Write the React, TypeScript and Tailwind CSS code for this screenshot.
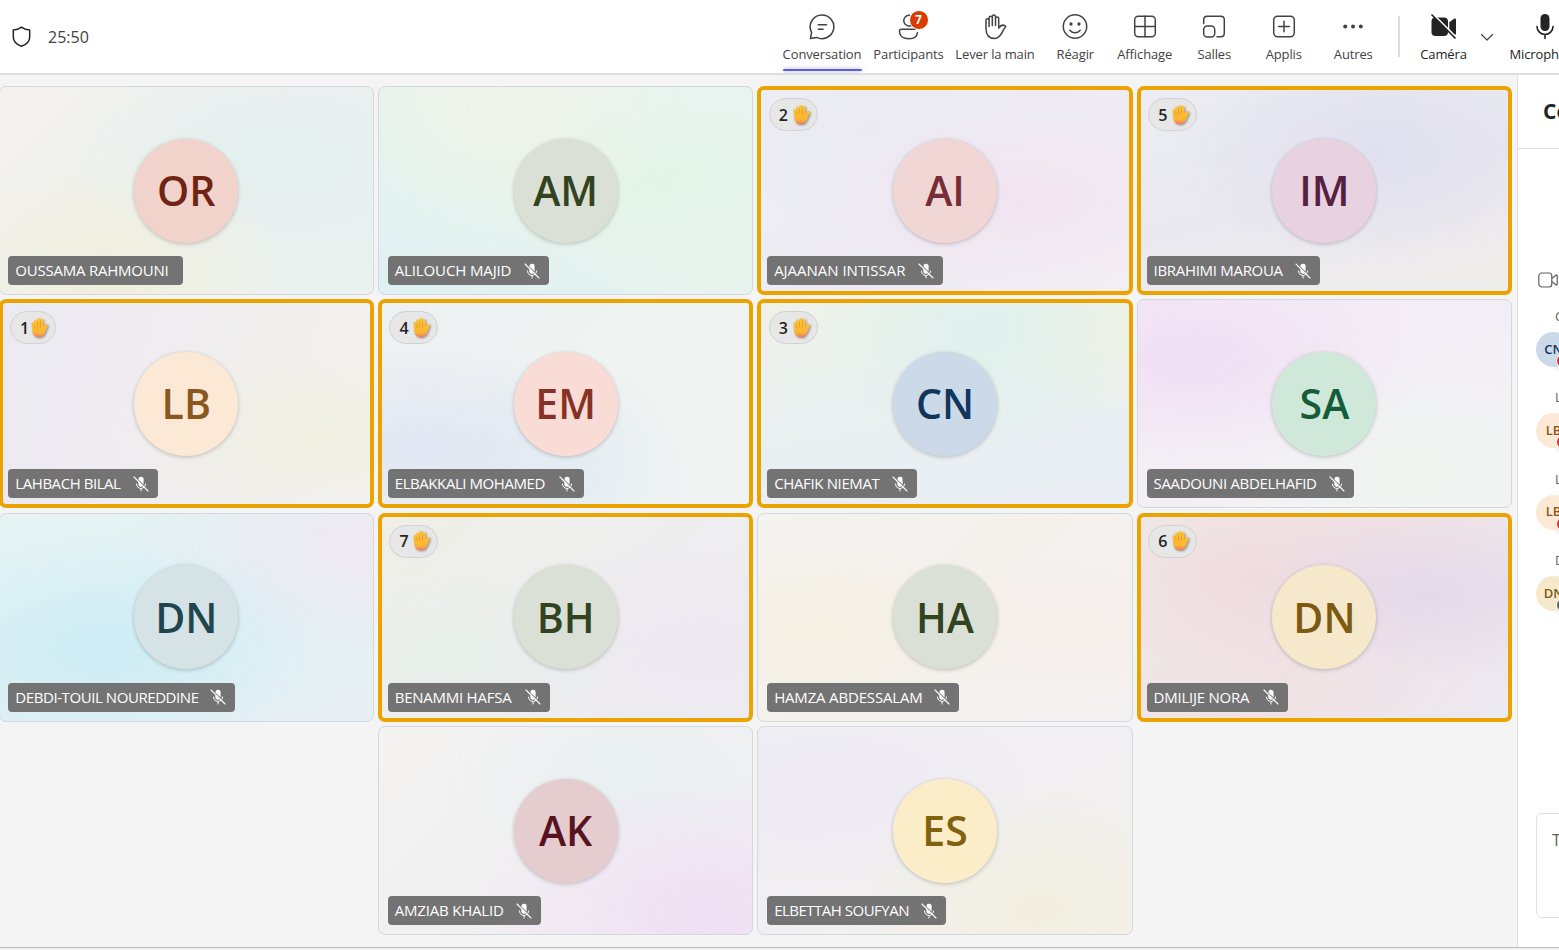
import type { ReactNode } from "react";

type Person = {
  initials: string;
  name: string;
  label: string;
  bg: string;
  avatar: string;
  muted?: boolean;
  hand?: number;
};

const people: Person[] = [
  {
    initials: "OR", name: "OUSSAMA RAHMOUNI", label: "w-[175px] tracking-[-0.23px]",
    bg: "bg-[radial-gradient(ellipse_at_28%_92%,#f1efdc_0%,transparent_48%),radial-gradient(ellipse_at_72%_35%,#e3efee_0%,transparent_55%),linear-gradient(135deg,#f4f2f0_0%,#edf0ee_50%,#e9f2f0_100%)]",
    avatar: "bg-[#f1d3cb] text-[#6f2414]",
  },
  {
    initials: "AM", name: "ALILOUCH MAJID", label: "w-[161px] tracking-[-0.13px]", muted: true,
    bg: "bg-[radial-gradient(ellipse_at_35%_5%,#eff3e8_0%,transparent_50%),radial-gradient(ellipse_at_75%_45%,#e3f4e7_0%,transparent_50%),linear-gradient(30deg,#e0f1f3_0%,#e7f3ed_50%,#e8f4f0_100%)]",
    avatar: "bg-[#dae0d5] text-[#31431f]",
  },
  {
    initials: "AI", name: "AJAANAN INTISSAR", label: "w-[176px] tracking-[-0.02px]", muted: true, hand: 2,
    bg: "bg-[radial-gradient(ellipse_at_70%_55%,#f1e4f0_0%,transparent_55%),radial-gradient(ellipse_at_30%_20%,#ebeaf3_0%,transparent_50%),linear-gradient(135deg,#edf0f5_0%,#eeeaf3_50%,#f3eef3_100%)]",
    avatar: "bg-[#f1d6d6] text-[#752d38]",
  },
  {
    initials: "IM", name: "IBRAHIMI MAROUA", label: "w-[173px] tracking-[-0.3px]", muted: true, hand: 5,
    bg: "bg-[radial-gradient(ellipse_at_65%_30%,#e1e0ef_0%,transparent_60%),linear-gradient(165deg,#ececf3_0%,#e9e8ef_50%,#f0eeeb_100%)]",
    avatar: "bg-[#e9d2e0] text-[#542143]",
  },
  {
    initials: "LB", name: "LAHBACH BILAL", label: "w-[150px] tracking-[-0.45px]", muted: true, hand: 1,
    bg: "bg-[radial-gradient(ellipse_at_88%_65%,#f0efe1_0%,transparent_48%),linear-gradient(105deg,#ebe9f2_0%,#efedf0_40%,#f0efed_70%,#f2f2f1_100%)]",
    avatar: "bg-[#fbe8d5] text-[#8a581f]",
  },
  {
    initials: "EM", name: "ELBAKKALI MOHAMED", label: "w-[196px] tracking-[-0.43px]", muted: true, hand: 4,
    bg: "bg-[radial-gradient(ellipse_at_12%_72%,#e1e6f3_0%,transparent_52%),radial-gradient(ellipse_at_50%_92%,#e4eff1_0%,transparent_50%),linear-gradient(135deg,#edf1f2_0%,#eff3f1_55%,#f1f3f3_100%)]",
    avatar: "bg-[#fadcd7] text-[#863125]",
  },
  {
    initials: "CN", name: "CHAFIK NIEMAT", label: "w-[150px] tracking-[-0.36px]", muted: true, hand: 3,
    bg: "bg-[radial-gradient(ellipse_at_60%_12%,#dff0ed_0%,transparent_52%),radial-gradient(ellipse_at_98%_15%,#eff1e4_0%,transparent_35%),linear-gradient(170deg,#eef2e9_0%,#e9f0f0_50%,#e9edf4_100%)]",
    avatar: "bg-[#cbd9e9] text-[#11365e]",
  },
  {
    initials: "SA", name: "SAADOUNI ABDELHAFID", label: "w-[207px] tracking-[-0.35px]", muted: true,
    bg: "bg-[radial-gradient(ellipse_at_15%_28%,#f0dff4_0%,transparent_50%),radial-gradient(ellipse_at_72%_80%,#eff4f0_0%,transparent_45%),linear-gradient(160deg,#f3e9f6_0%,#f3eff5_50%,#f3f3f4_100%)]",
    avatar: "bg-[#cfe8d9] text-[#155d39]",
  },
  {
    initials: "DN", name: "DEBDI-TOUIL NOUREDDINE", label: "w-[227px] tracking-[-0.43px]", muted: true,
    bg: "bg-[radial-gradient(ellipse_at_28%_65%,#cdedf5_0%,transparent_60%),radial-gradient(ellipse_at_100%_15%,#f0e9f0_0%,transparent_45%),linear-gradient(150deg,#e5f3f3_0%,#e1f0f4_50%,#e8eff3_100%)]",
    avatar: "bg-[#d5e2e6] text-[#20454c]",
  },
  {
    initials: "BH", name: "BENAMMI HAFSA", label: "w-[162px] tracking-[-0.25px]", muted: true, hand: 7,
    bg: "bg-[radial-gradient(ellipse_at_20%_72%,#e7efeb_0%,transparent_45%),radial-gradient(ellipse_at_85%_65%,#ede8f0_0%,transparent_55%),linear-gradient(135deg,#efefe7_0%,#eeeeee_45%,#eeebf1_100%)]",
    avatar: "bg-[#dae0d5] text-[#31431f]",
  },
  {
    initials: "HA", name: "HAMZA ABDESSALAM", label: "w-[192px] tracking-[-0.17px]", muted: true,
    bg: "bg-[radial-gradient(ellipse_at_15%_55%,#f5f0e3_0%,transparent_50%),radial-gradient(ellipse_at_85%_55%,#f5eeeb_0%,transparent_50%),linear-gradient(135deg,#f4f3ef_0%,#f4f1ed_50%,#f4f2f1_100%)]",
    avatar: "bg-[#dae0d5] text-[#31431f]",
  },
  {
    initials: "DN", name: "DMILIJE NORA", label: "w-[141px] tracking-[-0.24px]", muted: true, hand: 6,
    bg: "bg-[radial-gradient(ellipse_at_78%_38%,#e4d9ea_0%,transparent_48%),radial-gradient(ellipse_at_30%_30%,#f0dcdf_0%,transparent_50%),linear-gradient(125deg,#f1e9e8_0%,#f0e2e4_50%,#ece9f1_100%)]",
    avatar: "bg-[#f6e8ca] text-[#7d5a12]",
  },
  {
    initials: "AK", name: "AMZIAB KHALID", label: "w-[153px] tracking-[-0.2px]", muted: true,
    bg: "bg-[radial-gradient(ellipse_at_88%_90%,#f0dff3_0%,transparent_52%),radial-gradient(ellipse_at_65%_25%,#e9f0f1_0%,transparent_50%),linear-gradient(135deg,#f4f3f2_0%,#f1f0f1_50%,#eeeff5_100%)]",
    avatar: "bg-[#e5cdcf] text-[#571420]",
  },
  {
    initials: "ES", name: "ELBETTAH SOUFYAN", label: "w-[179px] tracking-[-0.5px]", muted: true,
    bg: "bg-[radial-gradient(ellipse_at_75%_88%,#f1eee0_0%,transparent_50%),radial-gradient(ellipse_at_20%_30%,#edeaf3_0%,transparent_50%),linear-gradient(150deg,#f0eff4_0%,#f1eff1_50%,#f3f1ed_100%)]",
    avatar: "bg-[#fcedc9] text-[#80610d]",
  },
];

function Stroke({ children, width = 1.5 }: { children: ReactNode; width?: number }) {
  return (
    <svg viewBox="0 0 28 28" className="size-[28px] shrink-0" fill="none" stroke="currentColor" strokeWidth={width} strokeLinecap="round" strokeLinejoin="round">
      {children}
    </svg>
  );
}

function MicOff() {
  return (
    <svg viewBox="0 0 16 16" className="size-4 shrink-0" fill="none" stroke="white" strokeLinecap="round">
      <path d="M5.4 3.3A2.600 2.600 0 0 1 10.600 3.600v4.800L5.400 3.500Z" fill="white" stroke="none" />
      <path d="M5.400 5.500v2.700A2.600 2.600 0 0 0 9.600 10.200Z" fill="white" stroke="none" />
      <path d="M3.400 8a4.600 4.600 0 0 0 7.600 3.400M12.500 8a4.600 4.600 0 0 1-.5 2M8 12.800v2.200" />
      <path d="M1 1l14 14" strokeWidth="1.100" />
    </svg>
  );
}

function HandEmoji() {
  return (
    <svg viewBox="0 0 22 24" className="-mr-px h-6 w-[22px] shrink-0 drop-shadow-[1px_1.5px_1px_rgba(60,50,70,0.5)]">
      <defs>
        <linearGradient id="skin" x1="0.4" y1="0" x2="0.4" y2="1">
          <stop offset="0" stopColor="#ffc531" />
          <stop offset="0.75" stopColor="#fdb532" />
          <stop offset="1" stopColor="#ef7d60" />
        </linearGradient>
      </defs>
      <path
        fill="url(#skin)"
        d="M2.600 7.400c0-1.500 2-1.900 2.500-.3l.4 1.200-.3-3.400c-.1-1.700 2.200-1.900 2.600-.3l.5 1.600.2-3.100c.1-1.500 2.500-1.500 2.700 0l.3 2.900.7-2.200c.5-1.400 2.500-.9 2.400.7l-.4 6.300 1.900-2.200c1.200-1.300 3.400-.5 2.700 1.100l-2.500 6.500c-1.200 3.100-3.300 5-6.600 5-4.600 0-6.300-3.200-6.500-7.200Z"
      />
      <path d="M5.600 8.300l.5 3.600M8.400 6l.3 5M11.500 5.800l-.1 5.200" stroke="#e2952a" strokeWidth=".8" strokeLinecap="round" />
    </svg>
  );
}

function Tile({ p }: { p: Person }) {
  return (
    <div
      className={`relative flex h-[209px] w-[375.4px] shrink-0 items-center justify-center overflow-hidden rounded-[7px] ${
        p.hand ? "border-4 border-[#eaa300]" : "border border-[#d3d9dc]"
      } ${p.bg}`}
    >
      <div className={`flex size-[104px] items-center justify-center rounded-full text-[41px] leading-none font-semibold shadow-[0_1px_4px_rgba(0,0,0,0.22)] ${p.avatar}`}>
        {p.initials}
      </div>
      {p.hand && (
        <div
          className={`absolute top-[8px] left-[7.5px] flex h-[33px] items-center justify-between rounded-full border border-[#d1d1d3] bg-[#e7e7e8] pr-[5px] pl-[9px] text-[16px] font-semibold text-[#242424] ${
            p.hand === 1 ? "w-[46px]" : "w-[49px]"
          }`}
        >
          {p.hand}
          <HandEmoji />
        </div>
      )}
      <div
        className={`absolute flex h-[29px] items-center justify-between rounded-[4px] bg-[#737374] pr-[9px] pl-[7px] text-[15px] leading-[29px] whitespace-nowrap text-white ${p.label} ${
          p.hand ? "bottom-[6px] left-[5.8px]" : "bottom-[9px] left-[8.8px]"
        }`}
      >
        <span>{p.name}</span>
        {p.muted && <MicOff />}
      </div>
    </div>
  );
}

function Tool({ w, label, children, active }: { w: string; label: string; children: ReactNode; active?: boolean }) {
  return (
    <div className={`relative flex h-full shrink-0 flex-col items-center pt-[13px] ${w}`}>
      <div className="relative flex h-[28px] items-center justify-center">{children}</div>
      <span className="mt-[4px] text-[13px] leading-[18px] tracking-[-0.12px] whitespace-nowrap">{label}</span>
      {active && <span className="absolute bottom-[2px] h-[2px] w-[79px] rounded-full bg-[#5b5fc7] shadow-[0_0_4px_rgba(91,95,199,0.6)]" />}
    </div>
  );
}

function Toolbar() {
  return (
    <header className="z-10 flex h-[73px] w-full shrink-0 items-center overflow-hidden bg-white text-[#424242]">
      <div className="flex w-[776.5px] shrink-0 items-center pl-[8px]">
        <Stroke width={1.500}>
          <path d="M13.500 4.200c2.200 1.800 4.500 2.700 8.200 2.800v6.700c0 4.700-3.100 7.700-8.200 9.500-5.100-1.800-8.200-4.800-8.200-9.500V7c3.700-.1 6-1 8.200-2.800Z" className="text-[#242424]" />
        </Stroke>
        <span className="ml-[12px] text-[16px]">25:50</span>
      </div>
      <Tool w="w-[91px]" label="Conversation" active>
        <Stroke>
          <path d="M14 2a12 11.800 0 1 1-5.400 22.400L2.400 25.600 3.600 19.400A11.800 11.800 0 0 1 14 2ZM10.300 11.700h8.200M10.300 16.300h4.800" />
        </Stroke>
      </Tool>
      <Tool w="w-[82px]" label="Participants">
        <Stroke>
          <path d="M14.500 2.200a5.400 5.400 0 1 0 3.300 9.400M22.500 19.500C22 23.300 18.800 25.800 14 25.800c-5.500 0-9.500-2.600-9.500-7v-.6c0-1.200.9-2 2-2H20" />
        </Stroke>
        <span className="absolute -top-[3px] left-[14px] flex size-[20px] items-center justify-center rounded-full border border-white bg-[#da3b01] text-[12px] font-bold text-white">7</span>
      </Tool>
      <Tool w="w-[91px]" label="Lever la main">
        <Stroke>
          <path d="M5 15.500V7.400a1.500 1.500 0 0 1 3.100 0v6M8.100 7.400V4.800a1.600 1.600 0 0 1 3.200 0v7.700M11.300 4.500V3.700a1.600 1.600 0 0 1 3.200 0v8.800M14.500 5.500a1.600 1.600 0 0 1 3.200 0v9.500c1.500-2.300 3.700-3.800 6.400-2.200.6.400.7 1 .2 1.500-3.200 2.900-4 11.200-10.500 11.200C7 25.500 5 21.500 5 15.500" />
        </Stroke>
      </Tool>
      <Tool w="w-[69.5px]" label="Réagir">
        <Stroke>
          <circle cx="14" cy="13.500" r="11.700" />
          <path d="M8.800 17.300c2.700 3.300 7.700 3.300 10.400 0" />
          <circle cx="10" cy="11" r=".9" fill="currentColor" />
          <circle cx="18" cy="11" r=".9" fill="currentColor" />
        </Stroke>
      </Tool>
      <Tool w="w-[69.5px]" label="Affichage">
        <Stroke>
          <rect x="3.700" y="3.200" width="20.600" height="20.600" rx="3.500" />
          <path d="M14 3.200v20.600M3.700 13.500h20.600" />
        </Stroke>
      </Tool>
      <Tool w="w-[69.5px]" label="Salles">
        <Stroke>
          <path d="M3.700 10.500V6.700c0-2 1.500-3.500 3.500-3.500h13.600c2 0 3.500 1.500 3.500 3.500v13.600c0 2-1.500 3.500-3.500 3.500H17" />
          <rect x="3.700" y="13" width="11" height="11" rx="3.500" />
        </Stroke>
      </Tool>
      <Tool w="w-[69.5px]" label="Applis">
        <Stroke>
          <rect x="3.700" y="3.200" width="20.600" height="20.600" rx="4" />
          <path d="M14 8.200v10.600M8.700 13.500h10.600" />
        </Stroke>
      </Tool>
      <Tool w="w-[69.5px]" label="Autres">
        <svg viewBox="0 0 28 28" className="size-[28px]" fill="currentColor">
          <circle cx="6.200" cy="13.500" r="2" />
          <circle cx="14" cy="13.500" r="2" />
          <circle cx="21.800" cy="13.500" r="2" />
        </svg>
      </Tool>
      <div className="ml-[9.5px] h-[41px] w-[2px] shrink-0 bg-[#dcdcdc]" />
      <div className="ml-[10px] flex h-full shrink-0 text-[#242424]">
        <Tool w="w-[68px]" label="Caméra">
          <svg viewBox="0 0 28 28" className="-ml-[2px] size-[28px]" fill="currentColor">
            <rect x="2.500" y="4.500" width="16.500" height="18.500" rx="4" />
            <path d="M20.300 9.300 25 5.700c.9-.6 2 0 2 1.100v13.800c0 1-1.100 1.600-2 1l-4.700-3.500Z" />
            <path d="M3.800.8 27.800 24.700" stroke="white" strokeWidth="1.800" />
            <path d="M2.500 1.500 26.500 25.500" stroke="currentColor" strokeWidth="1.700" />
          </svg>
        </Tool>
      </div>
      <svg viewBox="0 0 14 14" className="ml-[2.500px] size-[14px] shrink-0" fill="none" stroke="currentColor" strokeWidth="1.200" strokeLinecap="round" strokeLinejoin="round">
        <path d="M1.500 4.500 7 10l5.500-5.500" />
      </svg>
      <div className="ml-[9.500px] h-full text-[#242424]">
        <Tool w="w-[84px]" label="Microphone">
          <svg viewBox="0 0 28 28" className="-ml-[2px] size-[28px]" fill="none" stroke="currentColor" strokeWidth="1.600" strokeLinecap="round">
            <rect x="9.500" y="1" width="9" height="17" rx="4.500" fill="currentColor" stroke="none" />
            <path d="M6 13.500a8 8 0 0 0 16 0M14 21.500v4" />
          </svg>
        </Tool>
      </div>
    </header>
  );
}

const messages = [
  { initials: "CN", author: "CHAFIK NIEMAT", color: "bg-[#cbd9e9] text-[#11365e]", dot: "bg-[#d13438]" },
  { initials: "LB", author: "LAHBACH BILAL", color: "bg-[#fbe8d5] text-[#8a581f]", dot: "bg-[#d13438]" },
  { initials: "LB", author: "LAHBACH BILAL", color: "bg-[#fbe8d5] text-[#8a581f]", dot: "bg-[#d13438]" },
  { initials: "DN", author: "DMILIJE NORA", color: "bg-[#f6e8ca] text-[#7d5a12]", dot: "bg-[#616161]" },
];

function ChatPanel() {
  return (
    <aside className="flex w-[320px] shrink-0 flex-col border-l border-[#e0e0e0] bg-white">
      <div className="flex h-[75px] shrink-0 items-center border-b border-[#e0e0e0] pt-[2px] pl-[25px]">
        <h2 className="text-[21px] font-bold text-[#242424]">Conversation</h2>
      </div>
      <div className="mt-[119px] flex h-[24px] shrink-0 items-center pl-[20px] text-[#616161]">
        <svg viewBox="0 0 22 18" className="h-[18px] w-[22px]" fill="none" stroke="currentColor" strokeWidth="1.200" strokeLinejoin="round">
          <rect x=".8" y="2" width="13" height="14" rx="3" />
          <path d="M14 7.200 18.300 4c.4-.3.900 0 .9.500v9c0 .5-.5.800-.9.500L14 10.800" />
        </svg>
      </div>
      <div className="mt-[15px] flex flex-col">
        {messages.map((m, i) => (
          <div key={i} className="h-[81.300px] pl-[18px]">
            <div className="h-[25px] pl-[19px] text-[13px] leading-[18px] whitespace-nowrap text-[#616161]">{m.author}</div>
            <div className="flex">
              <div className={`relative z-10 flex size-[35px] shrink-0 items-center justify-center rounded-full text-[13px] font-semibold ${m.color}`}>
                {m.initials}
                <span className={`absolute top-[22px] left-[20px] size-[14px] rounded-full border-[1.5px] border-white ${m.dot}`} />
              </div>
              <div className="-mt-px -ml-[16px] h-[41px] w-[250px] rounded-[6px] bg-[#f5f5f5]" />
            </div>
          </div>
        ))}
      </div>
      <div className="mt-auto mb-[29px] ml-[18px] h-[105px] w-[290px] rounded-[6px] border border-[#e0e0e0] bg-white pt-[14px] pl-[15px] text-[16px] text-[#616161]">
        Tapez un message
      </div>
    </aside>
  );
}

export default function App() {
  return (
    <div className="flex h-[950px] w-[1559px] flex-col overflow-hidden bg-[#f0f0f0] font-['Open_Sans','Noto_Sans',sans-serif]">
      <Toolbar />
      <div className="z-10 h-[2px] shrink-0 bg-[#dedede]" />
      <div className="-mt-px flex h-[873px] shrink-0 overflow-hidden bg-[#f4f4f4]">
        <main className="w-[1517px] shrink-0 overflow-hidden pt-[12px]">
          <div className="-ml-[1.5px] flex w-[1513.700px] flex-wrap justify-center gap-x-[4px] gap-y-[4.400px]">
            {people.map((p) => (
              <Tile key={p.name} p={p} />
            ))}
          </div>
        </main>
        <ChatPanel />
      </div>
      <div className="h-px shrink-0 bg-[#bdbdbd]" />
    </div>
  );
}
